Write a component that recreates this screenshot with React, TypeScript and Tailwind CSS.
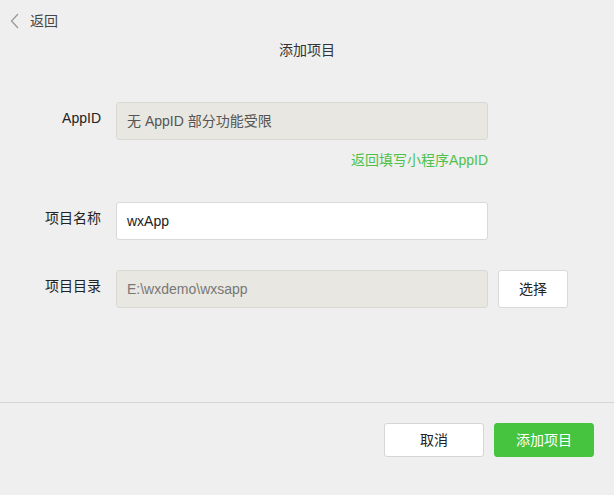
const font = { fontFamily: '"Liberation Sans", Arial, "Noto Sans CJK SC", sans-serif' }

export default function App() {
  return (
    <div className="flex h-[495px] w-[614px] flex-col bg-[#efefef] text-[14px] text-[#333]" style={font}>
      <div className="flex-1">
        <div className="mt-[13px] flex h-[16px] items-center px-[10px]">
          <svg width="10" height="16" viewBox="0 0 10 16" className="mr-[10px]">
            <path d="M8 1 L1.5 8 L8 15" fill="none" stroke="#999" strokeWidth="1.3" />
          </svg>
          <span className="leading-[16px] text-[#444]">返回</span>
        </div>
        <div className="mt-[11px] text-center leading-[20px] text-[#333]">添加项目</div>

        <div className="mt-[42px]">
          <div className="flex items-start">
            <label className="w-[102px] pt-[6px] pr-[1px] text-right leading-[20px] text-[#222]">AppID</label>
            <div className="ml-[14px] flex h-[38px] w-[372px] items-center rounded-[3px] border border-[#d8d8d4] bg-[#e8e7e1] px-[10px] text-[#555]">
              无 AppID 部分功能受限
            </div>
          </div>
          <div className="mt-[10px] flex w-[488px] justify-end leading-[20px] text-[#4fc14a]">
            返回填写小程序AppID
          </div>

          <div className="mt-[32px] flex items-start">
            <label className="w-[102px] pt-[6px] pr-[1px] text-right leading-[20px] text-[#222]">项目名称</label>
            <div className="ml-[14px] flex h-[38px] w-[372px] items-center rounded-[3px] border border-[#d9d9d9] bg-white px-[10px] text-[#222]">
              wxApp
            </div>
          </div>

          <div className="mt-[30px] flex items-start">
            <label className="w-[102px] pt-[6px] pr-[1px] text-right leading-[20px] text-[#222]">项目目录</label>
            <div className="ml-[14px] flex h-[38px] w-[372px] items-center rounded-[3px] border border-[#d8d8d4] bg-[#e8e7e1] px-[10px] text-[#777]">
              E:\wxdemo\wxsapp
            </div>
            <button className="ml-[10px] flex h-[38px] w-[70px] items-center justify-center rounded-[3px] border border-[#d9d9d9] bg-white text-[#222]">
              选择
            </button>
          </div>
        </div>
      </div>

      <div className="h-[93px] border-t border-[#d6d6d6]">
        <div className="flex justify-end gap-[10px] pt-[20px] pr-[20px]">
          <button className="flex h-[34px] w-[100px] items-center justify-center rounded-[3px] border border-[#d6d6d6] bg-white text-[#222]">
            取消
          </button>
          <button className="flex h-[34px] w-[100px] items-center justify-center rounded-[3px] border border-[#46c33f] bg-[#46c33f] text-white">
            添加项目
          </button>
        </div>
      </div>
    </div>
  )
}
